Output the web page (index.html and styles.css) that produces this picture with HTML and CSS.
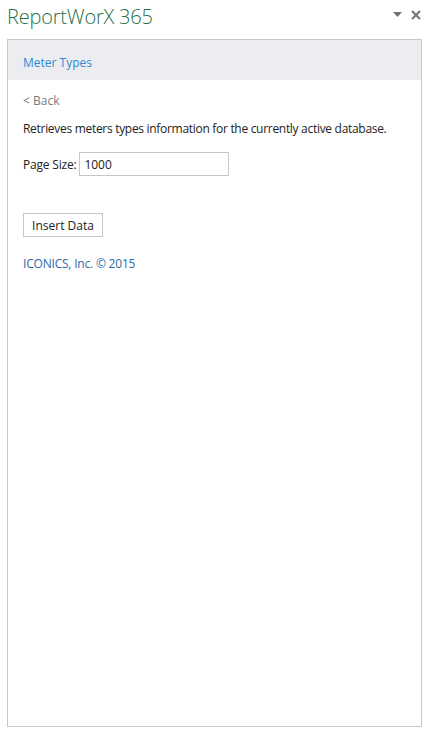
FILE: index.html
```html
<!DOCTYPE html>
<html>
<head>
<meta charset="utf-8">
<link rel="stylesheet" href="styles.css">
</head>
<body>
<div class="titlebar">
  <div class="title">ReportWorX 365</div>
  <div class="controls">
    <svg class="drop" width="9" height="6" viewBox="0 0 9 6"><path d="M0 0 H9 L4.5 5 Z" fill="#707070"/></svg>
    <svg class="close" width="10" height="10" viewBox="0 0 10 10"><path d="M1 1 L9 9 M9 1 L1 9" stroke="#707070" stroke-width="2"/></svg>
  </div>
</div>
<div class="panel">
  <div class="panel-head">Meter Types</div>
  <div class="panel-body">
    <div class="back">&lt; Back</div>
    <p class="desc">Retrieves meters types information for the currently active database.</p>
    <div class="field">
      <label class="label">Page Size:</label>
      <input class="input" type="text" value="1000">
    </div>
    <button class="btn">Insert Data</button>
    <div class="copy">ICONICS, Inc. © 2015</div>
  </div>
</div>
</body>
</html>
```
FILE: styles.css
```css
html, body {
  margin: 0;
  padding: 0;
  background: #fff;
  font-family: "Open Sans", "Noto Sans", sans-serif;
  font-size: 12px;
  color: #222;
}
.titlebar {
  height: 39px;
  display: flex;
  justify-content: space-between;
  align-items: flex-start;
  box-sizing: border-box;
}
.title {
  font-size: 20px;
  font-weight: 300;
  color: #1f7246;
  margin-left: 7px;
  margin-top: 4px;
  letter-spacing: -0.2px;
  line-height: 26px;
}
.controls {
  display: flex;
  align-items: center;
  gap: 9px;
  margin-right: 11px;
  margin-top: 10px;
}
.panel {
  margin-left: 7px;
  width: 415px;
  height: 688px;
  border: 1px solid #c8c8c8;
  box-sizing: border-box;
}
.panel-head {
  height: 40px;
  background: #ecedf1;
  color: #2b8ad6;
  padding-left: 15px;
  line-height: 46px;
  font-size: 12px;
}
.panel-body {
  padding: 12px 15px;
}
.back {
  color: #7a7a7a;
  line-height: 18px;
}
.desc {
  margin: 10px 0 0;
  line-height: 18px;
  letter-spacing: -0.3px;
}
.field {
  display: flex;
  align-items: center;
  margin-top: 14px;
  gap: 3px;
}
.label {
  letter-spacing: -0.2px;
}
.input {
  width: 150px;
  height: 24px;
  box-sizing: border-box;
  border: 1px solid #c6c6c6;
  font-family: inherit;
  font-size: 12px;
  padding: 0 4px;
  color: #222;
  outline: none;
}
.btn {
  display: block;
  margin-top: 37px;
  width: 80px;
  height: 24px;
  background: #fff;
  border: 1px solid #c6c6c6;
  font-family: inherit;
  font-size: 12px;
  color: #222;
  padding: 0;
}
.copy {
  margin-top: 18px;
  color: #2e6aa7;
  line-height: 18px;
  letter-spacing: -0.2px;
}
```
